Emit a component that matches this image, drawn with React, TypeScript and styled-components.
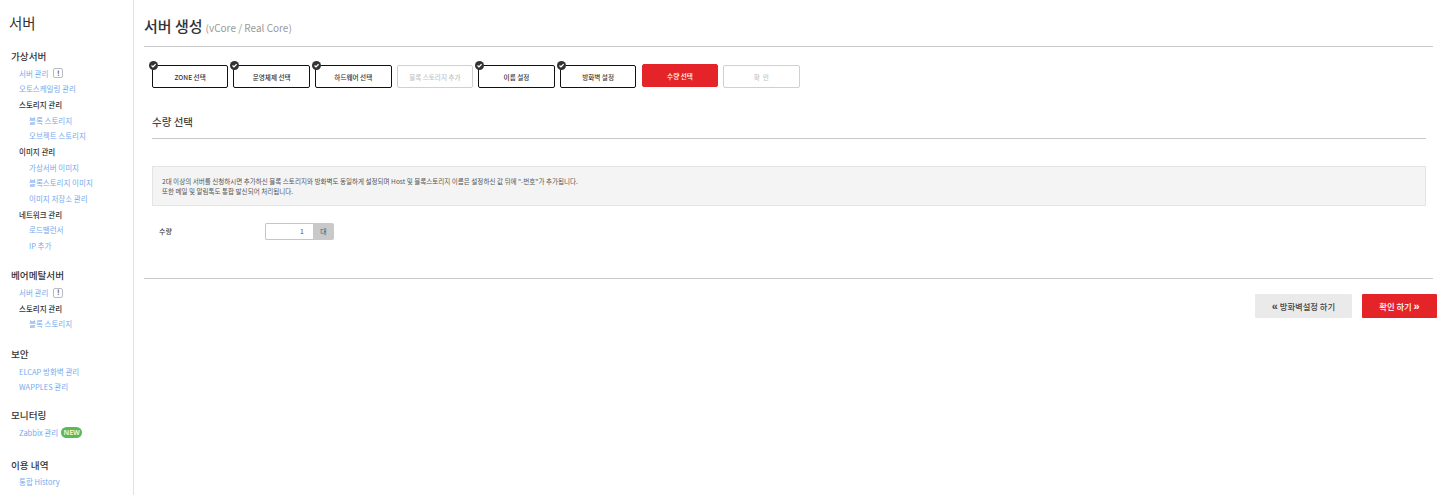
import React from "react";
import styled, { createGlobalStyle } from "styled-components";

const Global = createGlobalStyle`
  html, body { margin: 0; padding: 0; height: 495px; overflow: hidden; background: #fff; }
  body { font-family: "Noto Sans CJK KR", "Noto Sans", sans-serif; color: #333; }
  * { box-sizing: border-box; }
`;
const Page = styled.div`display: flex; width: 1451px; height: 495px; overflow: hidden;`;
const Sidebar = styled.aside`width: 134px; height: 495px; flex: none; border-right: 1px solid #e2e2e2; padding: 12px 0 0 9px; overflow: hidden;`;
const SideTitle = styled.h1`margin: 0 0 15px; font-size: 14.5px; line-height: 21px; font-weight: 400; color: #333;`;
const Group = styled.div<{ $gap: number }>`margin-bottom: ${(p) => p.$gap}px; padding-left: 2px;`;
const GroupTitle = styled.h2`margin: 0 0 1.6px; font-size: 9.6px; line-height: 16px; height: 16px; font-weight: 500; color: #333;`;
const Item = styled.div<{ $level?: number; $head?: boolean }>`
  display: flex; align-items: center; height: 15.7px; font-size: 7.5px; line-height: 15.7px; white-space: nowrap;
  padding-left: ${(p) => (p.$level === 2 ? 18 : 8)}px;
  color: ${(p) => (p.$head ? "#333" : "#76aaee")};
  font-weight: ${(p) => (p.$head ? 500 : 400)};
`;
const Bang = styled.span`display: inline-flex; align-items: center; justify-content: center; width: 10px; height: 10px; margin-left: 5px; border: 1px solid #bbb; border-radius: 2px; font-size: 7px; font-weight: 700; color: #555;`;
const NewBadge = styled.span`display: inline-flex; align-items: center; justify-content: center; width: 21px; height: 11px; margin-left: 3px; border-radius: 6px; background: #5cb85c; color: #e6f5c8; font-size: 7px; font-weight: 700; font-family: "Noto Sans", sans-serif;`;

const Main = styled.main`flex: none; width: 1317px; display: flex; flex-direction: column; padding: 0 0 0 10px;`;
const Header = styled.div`display: flex; align-items: baseline; width: 1289px; height: 47px; padding-top: 15px; border-bottom: 1px solid #c9c9c9; gap: 3px;`;
const Title = styled.h1`margin: 0; font-size: 15px; line-height: 22px; font-weight: 500; color: #333;`;
const Sub = styled.span`font-size: 10px; color: #999;`;
const Steps = styled.div`display: flex; gap: 5px; margin: 18px 0 0 7.8px;`;
const Step = styled.div<{ $state: "done" | "off" | "on" }>`
  position: relative; height: 23px; display: flex; align-items: center; justify-content: center;
  width: ${(p) => (p.$state === "on" ? 76 : 76.6)}px;
  margin: ${(p) => (p.$state === "on" ? "-1px 0 0 0.6px" : "0")};
  font-size: 6.6px; font-weight: 500; border-radius: 2px; white-space: pre;
  border: 1px solid ${(p) => (p.$state === "done" ? "#111" : p.$state === "off" ? "#d0d0d0" : "#e5242a")};
  background: ${(p) => (p.$state === "on" ? "#e5242a" : "#fff")};
  color: ${(p) => (p.$state === "done" ? "#333" : p.$state === "off" ? "#c4c4c4" : "#fff")};
`;
const Check = styled.svg`position: absolute; left: -4px; top: -5px; width: 9px; height: 9px;`;
const Section = styled.h3`margin: 25px 0 0 8px; width: 1274px; height: 26px; line-height: 18px; border-bottom: 1px solid #c9c9c9; font-size: 10.5px; font-weight: 500; color: #444;`;
const Note = styled.div`margin: 27px 0 0 8px; width: 1274px; height: 40px; padding: 10px 9px; background: #f4f4f4; border: 1px solid #e4e4e4; font-size: 6.55px; line-height: 9.5px; color: #555;`;
const Row = styled.div`display: flex; align-items: center; margin: 17px 0 0 15px;`;
const Label = styled.label`width: 106px; font-size: 7px; font-weight: 500; color: #444; margin-top: -1px;`;
const Qty = styled.div`width: 48px; height: 17px; border: 1px solid #c6c6c6; border-right: 0; border-radius: 2px 0 0 2px; text-align: right; padding-right: 9px; font-size: 7px; line-height: 15px; color: #555;`;
const Unit = styled.div`width: 21px; height: 17px; background: #c9c9c9; border-radius: 0 2px 2px 0; font-size: 7px; line-height: 17px; text-align: center; color: #555;`;
const Divider = styled.hr`margin: 38px 0 0; width: 1289px; height: 1px; border: 0; background: #c9c9c9;`;
const Actions = styled.div`display: flex; justify-content: flex-end; gap: 10px; width: 1293px; margin-top: 15px;`;
const Btn = styled.button<{ $primary?: boolean }>`
  height: 24px; width: ${(p) => (p.$primary ? 75 : 97)}px; border: 0; padding: 0; border-radius: 1px;
  font-family: inherit; font-size: 8.3px; font-weight: 500;
  background: ${(p) => (p.$primary ? "#e5242a" : "#eaeaea")};
  color: ${(p) => (p.$primary ? "#fff" : "#444")};
`;
const Arrow = styled.span`font-size: 11px; font-weight: 700; line-height: 8px; font-family: "Liberation Sans", sans-serif;`;

const CheckIcon = () => (
  <Check viewBox="0 0 10 10">
    <circle cx="5" cy="5" r="5" fill="#333" />
    <path d="M2.8 5 L4.4 6.6 L7.3 3.6" fill="none" stroke="#fff" strokeWidth="1.4" />
  </Check>
);

const steps: [string, "done" | "off" | "on"][] = [
  ["ZONE 선택", "done"], ["운영체제 선택", "done"], ["하드웨어 선택", "done"], ["블록 스토리지 추가", "off"],
  ["이름 설정", "done"], ["방화벽 설정", "done"], ["수량 선택", "on"], ["확  인", "off"],
];

export default function App() {
  return (
    <Page>
      <Global />
      <Sidebar>
        <SideTitle>서버</SideTitle>
        <Group $gap={13.5}>
          <GroupTitle>가상서버</GroupTitle>
          <Item>서버 관리<Bang>!</Bang></Item>
          <Item>오토스케일링 관리</Item>
          <Item $head>스토리지 관리</Item>
          <Item $level={2}>블록 스토리지</Item>
          <Item $level={2}>오브젝트 스토리지</Item>
          <Item $head>이미지 관리</Item>
          <Item $level={2}>가상서버 이미지</Item>
          <Item $level={2}>블록스토리지 이미지</Item>
          <Item $level={2}>이미지 저장소 관리</Item>
          <Item $head>네트워크 관리</Item>
          <Item $level={2}>로드밸런서</Item>
          <Item $level={2}>IP 추가</Item>
        </Group>
        <Group $gap={14}>
          <GroupTitle>베어메탈서버</GroupTitle>
          <Item>서버 관리<Bang>!</Bang></Item>
          <Item $head>스토리지 관리</Item>
          <Item $level={2}>블록 스토리지</Item>
        </Group>
        <Group $gap={12.5}>
          <GroupTitle>보안</GroupTitle>
          <Item>ELCAP 방화벽 관리</Item>
          <Item>WAPPLES 관리</Item>
        </Group>
        <Group $gap={16}>
          <GroupTitle>모니터링</GroupTitle>
          <Item>Zabbix 관리<NewBadge>NEW</NewBadge></Item>
        </Group>
        <Group $gap={13}>
          <GroupTitle>이용 내역</GroupTitle>
          <Item>통합 History</Item>
        </Group>
      </Sidebar>
      <Main>
        <Header><Title>서버 생성</Title><Sub>(vCore / Real Core)</Sub></Header>
        <Steps>
          {steps.map(([t, s]) => (
            <Step key={t} $state={s}>{s === "done" && <CheckIcon />}{t}</Step>
          ))}
        </Steps>
        <Section>수량 선택</Section>
        <Note>
          2대 이상의 서버를 신청하시면 추가하신 블록 스토리지와 방화벽도 동일하게 설정되며 Host 및 블록스토리지 이름은 설정하신 값 뒤에 "-번호"가 추가됩니다.<br />
          또한 메일 및 알림톡도 통합 발신되어 처리됩니다.
        </Note>
        <Row><Label>수량</Label><Qty>1</Qty><Unit>대</Unit></Row>
        <Divider />
        <Actions>
          <Btn><Arrow>«</Arrow> 방화벽설정 하기</Btn>
          <Btn $primary>확인 하기 <Arrow>»</Arrow></Btn>
        </Actions>
      </Main>
    </Page>
  );
}
